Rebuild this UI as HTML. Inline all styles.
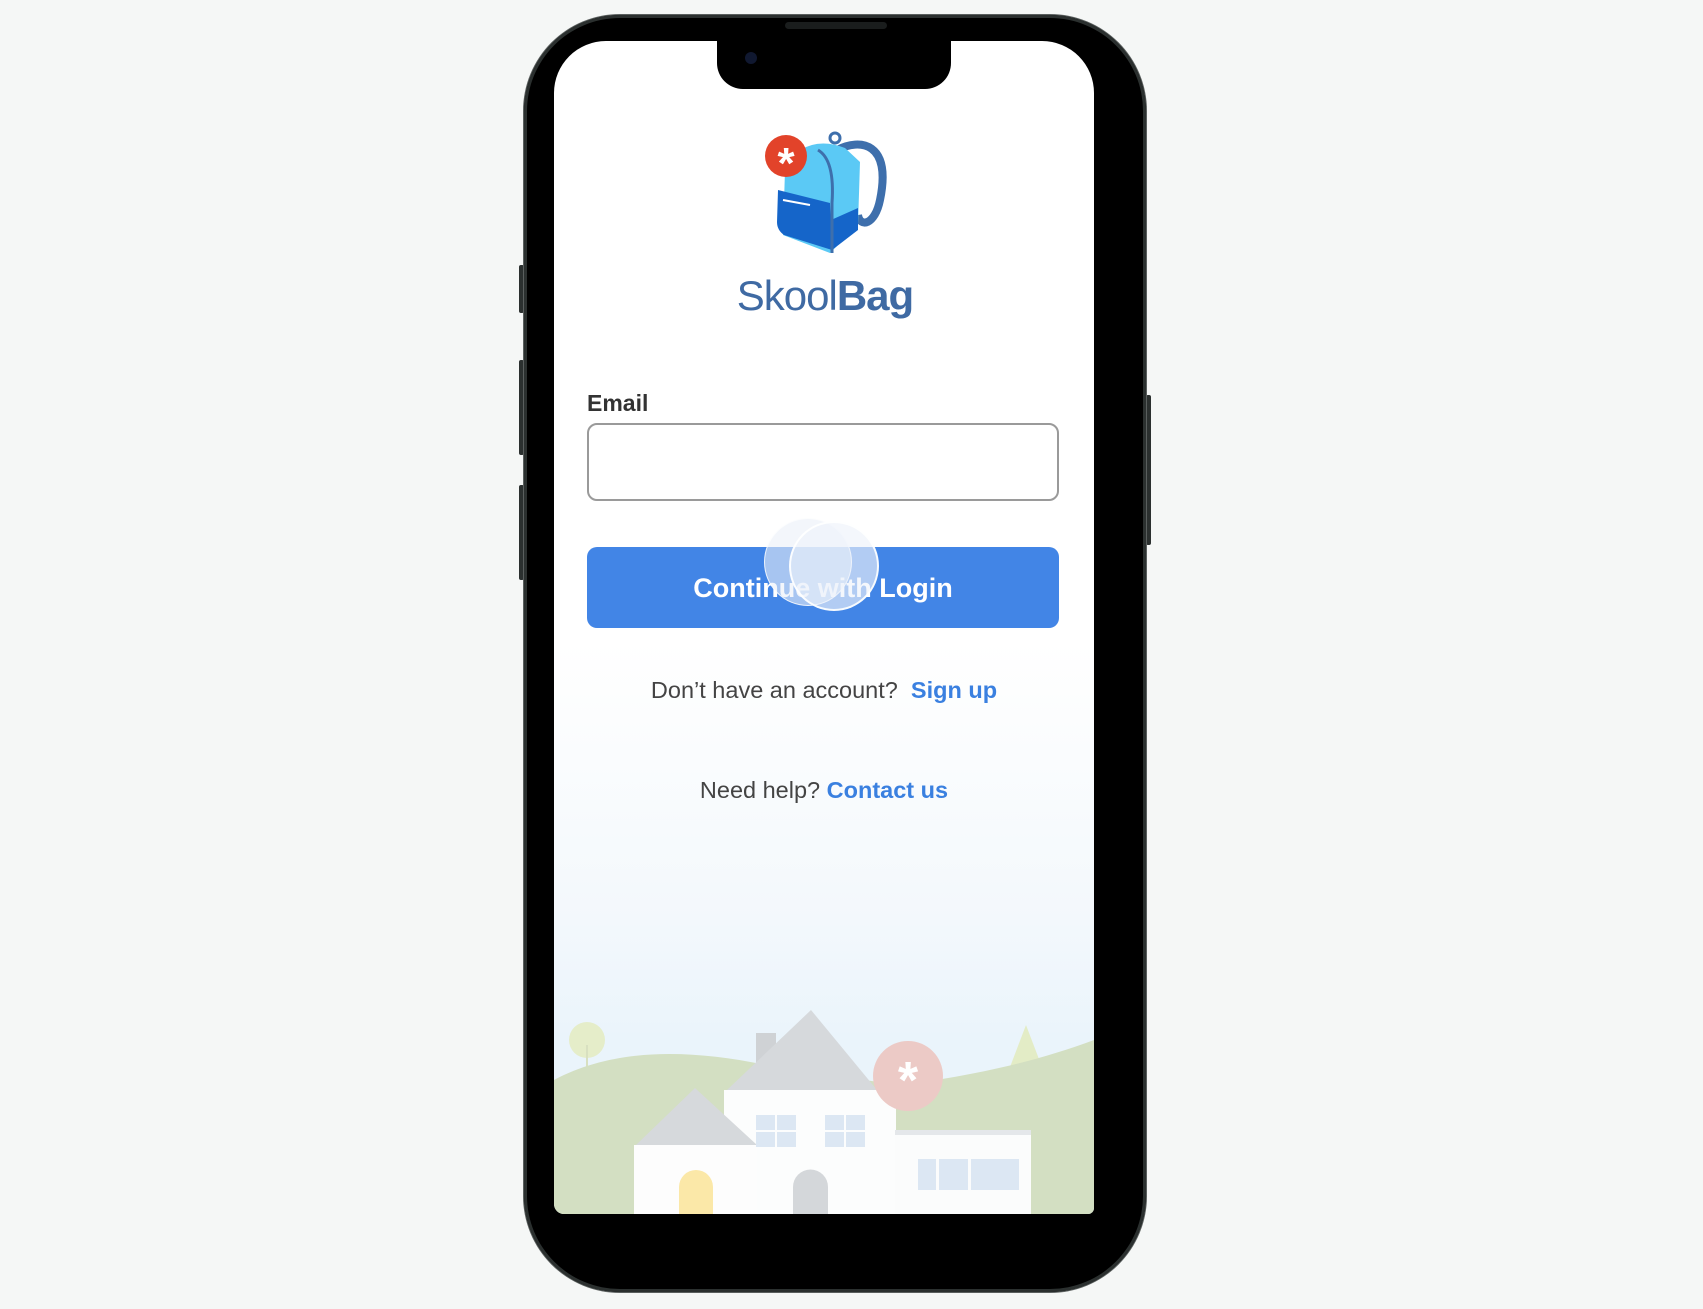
<!DOCTYPE html>
<html><head><meta charset="utf-8"><style>
html,body{margin:0;padding:0;width:1703px;height:1309px;background:#f5f7f6;overflow:hidden;font-family:"Liberation Sans",sans-serif}
.phone{position:absolute;left:524px;top:15px;width:622px;height:1277px;border-radius:96px;background:#000;box-shadow:0 0 0 3px #2b302f inset, 0 0 0 1px #5a5f5e}
.btnside{position:absolute;background:#2b302f;width:5px;border-radius:2px}
.screen{position:absolute;left:554px;top:41px;width:540px;height:1173px;border-radius:52px 52px 6px 10px;overflow:hidden;background:linear-gradient(#fff 0px,#fff 600px,#f3f8fc 880px,#eaf4fb 1000px)}
.notch{position:absolute;left:717px;top:40px;width:234px;height:49px;background:#000;border-radius:0 0 26px 26px}
.abs{position:absolute}
</style></head><body>
<div class="btnside" style="left:519px;top:265px;height:48px"></div>
<div class="btnside" style="left:519px;top:360px;height:95px"></div>
<div class="btnside" style="left:519px;top:485px;height:95px"></div>
<div class="btnside" style="left:1146px;top:395px;height:150px"></div>
<div class="phone"></div>
<div class="screen">
<svg class="abs" style="left:0;top:0" width="540" height="1173" viewBox="554 41 540 1173">
 <circle cx="587" cy="1040" r="18" fill="#e5edc9"/>
 <rect x="586" y="1045" width="2" height="25" fill="#d8e0c0"/>
 <polygon points="1026,1025 1010,1067 1042,1067" fill="#e3ecc6"/>
 <path d="M554 1080 C620 1045 700 1050 780 1068 L900 1085 C980 1075 1040 1060 1094 1040 L1094 1214 L554 1214Z" fill="#d3dfc2"/>
 <rect x="756" y="1033" width="20" height="35" fill="#cfd2d5"/>
 <polygon points="811,1010 727,1090 877,1090" fill="#d6d9dc"/>
 <rect x="724" y="1090" width="172" height="124" fill="#fcfdfd"/>
 <rect x="895" y="1132" width="136" height="82" fill="#fbfcfc"/>
 <rect x="895" y="1130" width="136" height="5" fill="#e4e7ea"/>
 <polygon points="695,1088 636,1145 757,1145" fill="#d6d9dc"/>
 <rect x="634" y="1145" width="123" height="69" fill="#fdfdfd"/>
 <g fill="#dce7f3">
 <rect x="756" y="1115" width="19" height="15"/><rect x="777" y="1115" width="19" height="15"/>
 <rect x="756" y="1132" width="19" height="15"/><rect x="777" y="1132" width="19" height="15"/>
 <rect x="825" y="1115" width="19" height="15"/><rect x="846" y="1115" width="19" height="15"/>
 <rect x="825" y="1132" width="19" height="15"/><rect x="846" y="1132" width="19" height="15"/>
 <rect x="918" y="1159" width="18" height="31"/><rect x="939" y="1159" width="29" height="31"/><rect x="971" y="1159" width="48" height="31"/>
 </g>
 <path d="M679 1214 V1187 a17 17 0 0 1 34 0 V1214Z" fill="#fbe8a8"/>
 <path d="M793 1214 V1187 a17 17 0 0 1 35 0 V1214Z" fill="#d4d7da"/>
 <circle cx="908" cy="1076" r="35" fill="#eccac6"/>
 <text x="908" y="1098" font-size="52" font-weight="bold" fill="#fff" text-anchor="middle" font-family="Liberation Sans">*</text>
</svg>
</div>
<div class="notch"></div>
<div class="abs" style="left:745px;top:52px;width:12px;height:12px;border-radius:50%;background:#101830"></div>
<div class="abs" style="left:785px;top:22px;width:102px;height:7px;border-radius:4px;background:#1a1d1d"></div>

<svg class="abs" style="left:760px;top:130px" width="130" height="130" viewBox="760 130 130 130">
 <path d="M837 150 C860 138 892 142 880 200 C875 225 860 228 858 215" fill="none" stroke="#3e6fac" stroke-width="8"/>
 <path d="M800 150 Q820 138 845 148 L860 162 L858 225 L830 253 L783 235 L785 170Z" fill="#5bc9f5"/>
 <path d="M778 190 L830 203 L832 250 L784 235 Q777 230 777 222Z" fill="#1565c9"/>
 <path d="M831 220 L858 208 L858 230 L832 250Z" fill="#1565c9"/>
 <path d="M818 150 Q835 160 832 203 L832 253" fill="none" stroke="#3e6fac" stroke-width="3"/>
 <path d="M783 200 L810 205" stroke="#fff" stroke-width="2"/>
 <circle cx="835" cy="138" r="5" fill="none" stroke="#3e6fac" stroke-width="3"/>
 <circle cx="786" cy="156" r="21" fill="#e2432a"/>
 <text x="786" y="178" font-size="44" font-weight="bold" fill="#fff" text-anchor="middle" font-family="Liberation Sans">*</text>
</svg>
<div class="abs" style="left:600px;width:450px;top:271px;text-align:center;font-size:42px;color:#3f6aa3;letter-spacing:-1px;line-height:50px"><span style="font-weight:300">Skool</span><b>Bag</b></div>

<div class="abs" style="left:587px;top:390px;font-size:23px;font-weight:bold;color:#333">Email</div>
<div class="abs" style="left:587px;top:423px;width:468px;height:74px;border:2px solid #9a9a9a;border-radius:10px;background:#fff"></div>
<div class="abs" style="left:587px;top:547px;width:472px;height:81px;border-radius:10px;background:#4285e6;color:#fff;font-weight:bold;font-size:27px;text-align:center;line-height:82px">Continue with Login</div>
<div class="abs" style="left:764px;top:518px;width:86px;height:86px;border-radius:50%;background:rgba(235,240,248,0.6);border:1px solid rgba(255,255,255,0.8)"></div>
<div class="abs" style="left:789px;top:521px;width:86px;height:86px;border-radius:50%;background:rgba(238,243,250,0.65);border:2px solid rgba(255,255,255,0.9)"></div>

<div class="abs" style="left:554px;width:540px;top:677px;text-align:center;font-size:23.5px;color:#444">Don’t have an account?&nbsp; <span style="color:#3a80e0;font-weight:bold">Sign up</span></div>
<div class="abs" style="left:554px;width:540px;top:777px;text-align:center;font-size:23.5px;color:#444">Need help? <span style="color:#3a80e0;font-weight:bold">Contact us</span></div>
</body></html>
